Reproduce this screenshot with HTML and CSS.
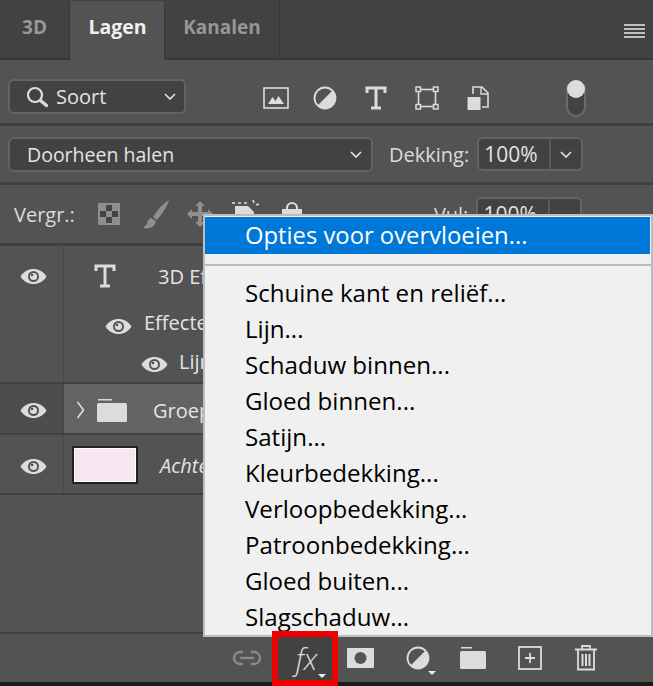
FILE: index.html
```html
<!DOCTYPE html>
<html lang="nl">
<head>
  <meta charset="UTF-8">
  <title>Lagen</title>
  <link rel="stylesheet" href="styles.css">
</head>
<body>
  <div class="panel">
    <div class="tabs">
      <div class="tab tab-3d">3D</div>
      <div class="tab tab-active">Lagen</div>
      <div class="tab tab-kanalen">Kanalen</div>
      <div class="tabs-rest">
        <div class="hamburger"><span></span><span></span><span></span><span></span></div>
      </div>
    </div>

    <div class="row filter-row">
      <div class="select select-soort">
        <svg class="search-icon" width="24" height="24" viewBox="0 0 24 24"><circle cx="10" cy="10" r="7" fill="none" stroke="#dcdcdc" stroke-width="2.2"/><path d="M15.500 15.500l6 5" stroke="#dcdcdc" stroke-width="3.4" stroke-linecap="round"/></svg>
        <span class="select-text">Soort</span>
        <svg class="chev" width="12" height="7" viewBox="0 0 12 7"><path d="M1 1l5 5 5-5" fill="none" stroke="#e4e4e4" stroke-width="1.6"/></svg>
      </div>
      <div class="filter-icons">
        <svg width="26" height="22" viewBox="0 0 26 22"><rect x="1" y="1" width="24" height="20" fill="none" stroke="#dcdcdc" stroke-width="1.6"/><path d="M5 17l4.500-7 3 4 3-5 5.500 8z" fill="#dcdcdc"/></svg>
        <svg width="24" height="24" viewBox="0 0 24 24"><circle cx="12" cy="12" r="10.500" fill="none" stroke="#dcdcdc" stroke-width="1.800"/><path d="M19.500 4.500A10.500 10.500 0 0 1 4.500 19.500z" fill="#dcdcdc"/></svg>
        <svg class="icon-spaced" width="22" height="24" viewBox="0 0 22 24"><path d="M2 7V2h18v5M11 2v20M6 22h10" fill="none" stroke="#dcdcdc" stroke-width="3"/></svg>
        <svg class="icon-spaced" width="24" height="24" viewBox="0 0 24 24"><rect x="3.500" y="3.500" width="17" height="17" fill="none" stroke="#dcdcdc" stroke-width="1.600"/><g fill="#555" stroke="#dcdcdc" stroke-width="1.500"><rect x="1" y="1" width="4.500" height="4.500"/><rect x="18.500" y="1" width="4.500" height="4.500"/><rect x="1" y="18.500" width="4.500" height="4.500"/><rect x="18.500" y="18.500" width="4.500" height="4.500"/></g></svg>
        <svg class="icon-spaced" width="22" height="24" viewBox="0 0 22 24"><path d="M6 8V1h9l6 6v14h-6" fill="none" stroke="#dcdcdc" stroke-width="1.600"/><path d="M14 1v7h7" fill="none" stroke="#dcdcdc" stroke-width="1.400"/><rect x="0.500" y="11" width="13" height="13" fill="#dcdcdc"/></svg>
      </div>
      <div class="toggle"><div class="knob"></div></div>
    </div>

    <div class="row blend-row">
      <div class="select select-blend">
        <span class="select-text">Doorheen halen</span>
        <svg class="chev" width="12" height="7" viewBox="0 0 12 7"><path d="M1 1l5 5 5-5" fill="none" stroke="#e4e4e4" stroke-width="1.6"/></svg>
      </div>
      <span class="label label-dekking">Dekking:</span>
      <div class="percent">
        <span class="percent-value">100%</span>
        <span class="percent-btn"><svg width="12" height="7" viewBox="0 0 12 7"><path d="M1 1l5 5 5-5" fill="none" stroke="#e4e4e4" stroke-width="1.6"/></svg></span>
      </div>
    </div>

    <div class="row lock-row">
      <span class="label label-vergr">Vergr.:</span>
      <div class="lock-icons">
        <svg width="24" height="24" viewBox="0 0 24 24"><rect x="1" y="1" width="22" height="22" fill="#8f8f8f"/><g fill="#444"><rect x="9" y="3" width="6" height="6"/><rect x="3" y="9" width="6" height="6"/><rect x="15" y="9" width="6" height="6"/><rect x="9" y="15" width="6" height="6"/></g></svg>
        <svg class="lock-brush" width="28" height="30" viewBox="0 0 28 30"><path d="M27 1C22 4 15 11 11 18l4 3C20 15 25 8 27 1zM9 19c-3 1-4 4-4 6l-4 4c5 1 12 0 13-7z" fill="#8f8f8f"/></svg>
        <svg class="lock-move" width="28" height="28" viewBox="0 0 28 28"><path d="M14 1l5 5h-3v6h6V9l5 5-5 5v-3h-6v6h3l-5 5-5-5h3v-6H6v3l-5-5 5-5v3h6V6H9z" fill="#8f8f8f"/></svg>
        <svg class="lock-crop" width="30" height="28" viewBox="0 0 30 28"><path d="M2 3h3M8 3h3M14 3h3M23 0l1 3M29 4l-3 1" stroke="#dcdcdc" stroke-width="1.6"/><path d="M5 6h13l6 6v15H5z" fill="#dcdcdc"/></svg>
        <svg class="lock-padlock" width="22" height="26" viewBox="0 0 22 26"><path d="M6 9V7a5 5 0 0 1 10 0v2" fill="none" stroke="#dcdcdc" stroke-width="2.200"/><rect x="1" y="8" width="20" height="17" fill="#dcdcdc"/></svg>
      </div>
      <span class="label label-vul">Vul:</span>
      <div class="percent">
        <span class="percent-value">100%</span>
        <span class="percent-btn"></span>
      </div>
    </div>

    <div class="layers">
      <div class="layer layer-text">
        <div class="eye-col">
          <svg class="eye" width="27" height="17" viewBox="0 0 27 17"><use href="#eye"/></svg>
        </div>
        <div class="layer-main">
          <div class="sub sub-name">
            <svg class="t-icon" width="22" height="24" viewBox="0 0 22 24"><path d="M2 7V2h18v5M11 2v20M6 22h10" fill="none" stroke="#dcdcdc" stroke-width="3"/></svg>
            <span class="layer-name">3D Effect</span>
          </div>
          <div class="sub sub-effects">
            <svg class="eye" width="27" height="17" viewBox="0 0 27 17"><use href="#eye"/></svg>
            <span class="layer-name">Effecten</span>
          </div>
          <div class="sub sub-line">
            <svg class="eye" width="27" height="17" viewBox="0 0 27 17"><use href="#eye"/></svg>
            <span class="layer-name">Lijn</span>
          </div>
        </div>
      </div>
      <div class="layer layer-group">
        <div class="eye-col">
          <svg class="eye" width="27" height="17" viewBox="0 0 27 17"><use href="#eye"/></svg>
        </div>
        <div class="layer-main group-main">
          <svg class="group-chev" width="9" height="18" viewBox="0 0 9 18"><path d="M1.500 1l6 8-6 8" fill="none" stroke="#e4e4e4" stroke-width="1.500"/></svg>
          <svg class="folder" width="30" height="24" viewBox="0 0 30 24"><path d="M1 1h14v1.500H1z" fill="#dcdcdc"/><rect y="5" width="30" height="19" rx="1.500" fill="#dcdcdc"/></svg>
          <span class="layer-name">Groep 1</span>
        </div>
      </div>
      <div class="layer layer-back">
        <div class="eye-col">
          <svg class="eye" width="27" height="17" viewBox="0 0 27 17"><use href="#eye"/></svg>
        </div>
        <div class="layer-main back-main">
          <div class="thumb"></div>
          <span class="layer-name layer-italic">Achtergrond</span>
        </div>
      </div>
    </div>

    <div class="footer">
      <svg width="30" height="16" viewBox="0 0 30 16"><g fill="none" stroke="#8a8a8a" stroke-width="2.400"><path d="M11 2H8a6 6 0 0 0 0 12h3"/><path d="M19 2h3a6 6 0 0 1 0 12h-3"/><path d="M8 8h14"/></g></svg>
      <div class="fx"><span class="fx-text">fx</span><span class="tri fx-tri"></span></div>
      <svg class="foot-mask" width="27" height="20" viewBox="0 0 27 20"><rect width="27" height="20" rx="1" fill="#dcdcdc"/><circle cx="13.500" cy="10" r="6" fill="#555"/></svg>
      <div class="adjust">
        <svg width="24" height="24" viewBox="0 0 24 24"><circle cx="12" cy="12" r="10.500" fill="none" stroke="#dcdcdc" stroke-width="1.800"/><path d="M19.500 4.500A10.500 10.500 0 0 1 4.500 19.500z" fill="#dcdcdc"/></svg>
        <span class="tri adjust-tri"></span>
      </div>
      <svg class="foot-folder" width="26" height="22" viewBox="0 0 26 22"><path d="M1 0h11v1.500H1z" fill="#dcdcdc"/><rect y="4" width="26" height="18" rx="1.500" fill="#dcdcdc"/></svg>
      <svg class="foot-new" width="24" height="24" viewBox="0 0 24 24"><rect x="1" y="1" width="22" height="22" fill="none" stroke="#dcdcdc" stroke-width="1.800"/><path d="M12 7v10M7 12h10" stroke="#dcdcdc" stroke-width="1.800"/></svg>
      <svg class="foot-trash" width="24" height="26" viewBox="0 0 24 26"><path d="M1 4.500h22M8 4V1h8v3" fill="none" stroke="#dcdcdc" stroke-width="1.800"/><path d="M4 5v19.500h16V5" fill="none" stroke="#dcdcdc" stroke-width="1.800"/><path d="M8.500 9v12M12 9v12M15.500 9v12" stroke="#dcdcdc" stroke-width="2"/></svg>
    </div>
    <div class="bottom-strip"></div>

    <div class="menu">
      <div class="menu-item menu-item-active">Opties voor overvloeien...</div>
      <div class="menu-sep"></div>
      <div class="menu-item">Schuine kant en reliëf...</div>
      <div class="menu-item">Lijn...</div>
      <div class="menu-item">Schaduw binnen...</div>
      <div class="menu-item">Gloed binnen...</div>
      <div class="menu-item">Satijn...</div>
      <div class="menu-item">Kleurbedekking...</div>
      <div class="menu-item">Verloopbedekking...</div>
      <div class="menu-item">Patroonbedekking...</div>
      <div class="menu-item">Gloed buiten...</div>
      <div class="menu-item">Slagschaduw...</div>
    </div>
  </div>

  <svg class="defs" width="0" height="0">
    <defs>
      <g id="eye">
        <path fill-rule="evenodd" d="M0.500 8.500C4 3 8.500 1 13.500 1s9.500 2 13 7.500c-3.500 5.500-8 7.500-13 7.500s-9.500-2-13-7.500zM13.500 3a5.500 5.500 0 1 0 0 11 5.500 5.500 0 0 0 0-11z" fill="#dcdcdc"/>
        <circle cx="13.500" cy="8.500" r="3.600" fill="#dcdcdc"/>
        <circle cx="12" cy="7" r="1.300" fill="#4f4f4f"/>
      </g>
    </defs>
  </svg>
</body>
</html>
```

FILE: styles.css
```css
html, body {
  margin: 0;
  padding: 0;
  background: #1a1a1a;
}
body {
  font-family: "Open Sans", "Liberation Sans", sans-serif;
  color: #e4e4e4;
}
svg {
  display: block;
  flex: none;
}
.defs {
  position: absolute;
}
.panel {
  position: relative;
  width: 653px;
  height: 686px;
  background: #535353;
  overflow: hidden;
  display: flex;
  flex-direction: column;
}

/* tabs */
.tabs {
  display: flex;
  height: 60px;
  flex: none;
  background: #424242;
  padding-top: 1px;
  box-sizing: border-box;
}
.tab {
  font-weight: 700;
  font-size: 19px;
  line-height: 52px;
  color: #979797;
  text-align: center;
  border-right: 1px solid #383838;
  border-bottom: 2px solid #383838;
  box-sizing: border-box;
}
.tab-3d {
  width: 70px;
}
.tab-active {
  width: 95px;
  padding-left: 1px;
  background: #535353;
  color: #f0f0f0;
  border-bottom: 0;
  font-size: 19.5px;
}
.tab-kanalen {
  width: 115px;
}
.tabs-rest {
  flex: 1;
  display: flex;
  justify-content: flex-end;
  border-bottom: 2px solid #383838;
  padding: 23px 8px 0 0;
}
.hamburger {
  width: 21px;
}
.hamburger span {
  display: block;
  height: 2px;
  margin-bottom: 2px;
  background: #c0c0c0;
}

/* toolbar rows */
.row {
  display: flex;
  align-items: center;
  flex: none;
  border-bottom: 3px solid #404040;
  box-sizing: border-box;
}
.filter-row {
  height: 66px;
  padding: 10px 0 0 8px;
}
.blend-row {
  height: 59px;
  padding-left: 8px;
}
.lock-row {
  height: 61px;
  padding-left: 14px;
}
.select {
  display: flex;
  align-items: center;
  height: 35px;
  background: #424242;
  border: 2px solid #636363;
  border-radius: 6px;
  box-sizing: border-box;
  font-size: 20px;
}
.select-text {
  flex: 1;
}
.select-soort {
  width: 178px;
  padding: 0 8px 0 15px;
}
.select-soort .select-text {
  margin-left: 7px;
}
.select-blend {
  width: 365px;
  padding: 0 9px 0 17px;
  font-size: 19.5px;
}
.filter-icons {
  display: flex;
  align-items: center;
  gap: 24px;
  margin: 2px 0 0 77px;
}
.icon-spaced {
  margin-left: 4px;
}
.toggle {
  position: relative;
  width: 20px;
  height: 37px;
  margin: 3px 0 0 77px;
  box-sizing: border-box;
  border: 2px solid #6a6a6a;
  border-radius: 10px;
  background: #424242;
}
.knob {
  position: absolute;
  left: -1px;
  top: -2px;
  width: 18px;
  height: 18px;
  border-radius: 50%;
  background: #dcdcdc;
}
.label {
  font-size: 20px;
  color: #dcdcdc;
}
.label-dekking {
  margin-left: 16px;
}
.percent {
  display: flex;
  height: 34px;
  margin-left: 8px;
  background: #424242;
  border: 2px solid #636363;
  border-radius: 6px;
  box-sizing: border-box;
  font-size: 21px;
}
.percent-value {
  width: 72px;
  padding-left: 5px;
  box-sizing: border-box;
  line-height: 30px;
  border-right: 2px solid #5a5a5a;
}
.percent-btn {
  width: 30px;
  display: flex;
  align-items: center;
  justify-content: center;
}
.lock-icons {
  display: flex;
  align-items: center;
  gap: 18px;
  margin-left: 22px;
}
.lock-brush {
  margin-left: 3px;
}
.lock-move,
.lock-crop {
  margin-left: -2px;
}
.lock-padlock {
  margin-left: 3px;
}
.label-vul {
  margin-left: 131px;
}

/* layers */
.layers {
  flex: 1;
  display: flex;
  flex-direction: column;
}
.layer {
  display: flex;
  flex: none;
  border-bottom: 2px solid #404040;
}
.layer-text {
  height: 136px;
}
.layer-group {
  height: 49px;
}
.layer-back {
  height: 58px;
}
.eye-col {
  width: 64px;
  flex: none;
  display: flex;
  justify-content: center;
  border-right: 1px solid #484848;
  padding: 22px 0 0 3px;
  box-sizing: border-box;
}
.layer-group .eye-col {
  background: #4d4d4d;
  padding-top: 18px;
}
.layer-back .eye-col {
  padding-top: 23px;
}
.layer-main {
  flex: 1;
  display: flex;
  align-items: center;
}
.layer-text .layer-main {
  flex-direction: column;
  align-items: stretch;
}
.layer-name {
  font-size: 20px;
  color: #e4e4e4;
  white-space: nowrap;
}
.sub {
  display: flex;
  align-items: center;
}
.sub-name {
  height: 60px;
  padding-left: 30px;
}
.sub-name .layer-name {
  margin-left: 42px;
}
.sub-effects {
  height: 40px;
  padding-left: 41px;
}
.sub-effects .layer-name {
  margin: 0 0 8px 12px;
}
.sub-line {
  height: 36px;
  padding-left: 77px;
}
.sub-line .layer-name {
  margin: 0 0 6px 11px;
}
.group-main {
  background: #636363;
  padding: 3px 0 0 12px;
}
.folder {
  margin-left: 12px;
}
.group-main .layer-name {
  margin-left: 26px;
}
.back-main {
  padding: 2px 0 0 10px;
}
.thumb {
  width: 60px;
  height: 32px;
  background: #f6e6ef;
  border: 1px solid #fff;
  outline: 2px solid #222;
}
.layer-italic {
  font-style: italic;
  margin-left: 24px;
}

/* footer */
.footer {
  height: 50px;
  flex: none;
  display: flex;
  align-items: center;
  padding-left: 232px;
  box-sizing: border-box;
  background: #535353;
  border-top: 2px solid #404040;
}
.bottom-strip {
  height: 4px;
  flex: none;
  background: #1a1a1a;
}
.fx {
  position: relative;
  z-index: 2;
  width: 66px;
  height: 55px;
  margin-left: 10px;
  padding-left: 3px;
  box-sizing: border-box;
  border: 6px solid #f00000;
  background: #424242;
  display: flex;
  align-items: center;
  justify-content: center;
  flex: none;
}
.fx-text {
  font-family: "Open Sans", sans-serif;
  font-style: italic;
  font-weight: 300;
  font-size: 29px;
  color: #dcdcdc;
}
.tri {
  position: absolute;
  width: 0;
  height: 0;
  border-left: 4px solid transparent;
  border-right: 4px solid transparent;
  border-top: 4px solid #f0f0f0;
}
.fx-tri {
  right: 6px;
  bottom: 2px;
}
.foot-mask {
  margin-left: 9px;
}
.adjust {
  position: relative;
  margin-left: 32px;
}
.adjust-tri {
  left: 22px;
  bottom: -5px;
}
.foot-folder {
  margin-left: 30px;
}
.foot-new {
  margin-left: 32px;
}
.foot-trash {
  margin-left: 32px;
}

/* context menu */
.menu {
  position: absolute;
  z-index: 1;
  left: 203px;
  top: 214px;
  width: 450px;
  height: 423px;
  box-sizing: border-box;
  background: #f0f0f0;
  border: 2px solid #bdbdbd;
  padding-top: 1px;
  color: #000;
  font-family: "Open Sans", "Liberation Sans", sans-serif;
  font-size: 24.1px;
}
.menu-item {
  height: 36px;
  line-height: 36px;
  padding-left: 40px;
  white-space: nowrap;
}
.menu-item-active {
  height: 37px;
  line-height: 37px;
  margin-right: 1px;
  background: #0078d7;
  color: #fff;
  font-size: 23.8px;
}
.menu-sep {
  height: 2px;
  margin: 10px 0 9px;
  background: #bcbcbc;
}
```
